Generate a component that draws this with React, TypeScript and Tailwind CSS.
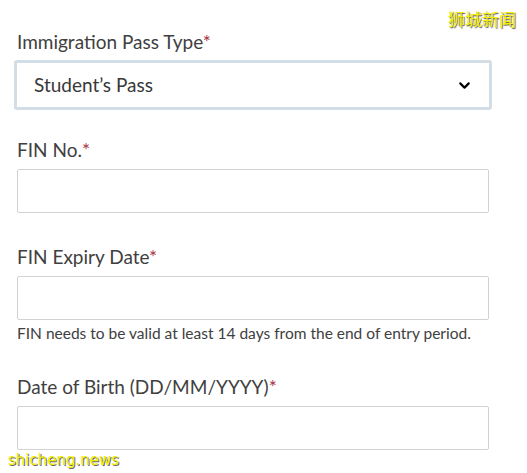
import { ChevronDown } from 'lucide-react';

const Label = ({ text }: { text: string }) => (
  <label className="block text-[19px] leading-[22px] text-[#404040] mb-2">
    {text}
    <span className="text-[#a8323e]">*</span>
  </label>
);

const TextInput = () => (
  <input
    type="text"
    className="block w-full h-[44px] border border-[#d2d2d2] rounded-[2px] bg-white px-3 outline-none"
  />
);

export default function App() {
  return (
    <div
      className="relative w-[527px] h-[473px] overflow-hidden bg-white"
      style={{ fontFamily: 'Lato, "Noto Sans", sans-serif' }}
    >
      {/* Form */}
      <div className="pl-[17px] pr-[38px] pt-[31px]">
        <Label text="Immigration Pass Type" />
        <div className="-mx-[3px] flex items-center justify-between h-[50px] rounded-[3px] border-[3px] border-[#d3dde6] bg-white pl-[17px] pr-[16px] -mt-[1px]">
          <span className="text-[19px] text-[#383838]">Student’s Pass</span>
          <ChevronDown className="w-[17px] h-[17px] text-black" strokeWidth={3} />
        </div>

        <div className="mt-[29px]">
          <Label text="FIN No." />
          <TextInput />
        </div>

        <div className="mt-[33px]">
          <Label text="FIN Expiry Date" />
          <TextInput />
          <p className="mt-[3px] text-[15.5px] leading-[20px] text-[#404040]">
            FIN needs to be valid at least 14 days from the end of entry period.
          </p>
        </div>

        <div className="mt-[33px]">
          <Label text="Date of Birth (DD/MM/YYYY)" />
          <TextInput />
        </div>
      </div>

      {/* Watermarks */}
      <span
        className="absolute right-[11px] top-[9px] text-[17px] leading-[20px] text-[#f4f000]"
        style={{ fontFamily: '"Noto Sans CJK SC", sans-serif', textShadow: '1px 1px 1px #555' }}
      >
        狮城新闻
      </span>
      <span
        className="absolute left-[8px] top-[450px] text-[15px] leading-[20px] text-[#f0ec00]"
        style={{ fontFamily: '"DejaVu Sans", sans-serif', textShadow: '1px 1px 0 #666' }}
      >
        shicheng.news
      </span>
    </div>
  );
}
